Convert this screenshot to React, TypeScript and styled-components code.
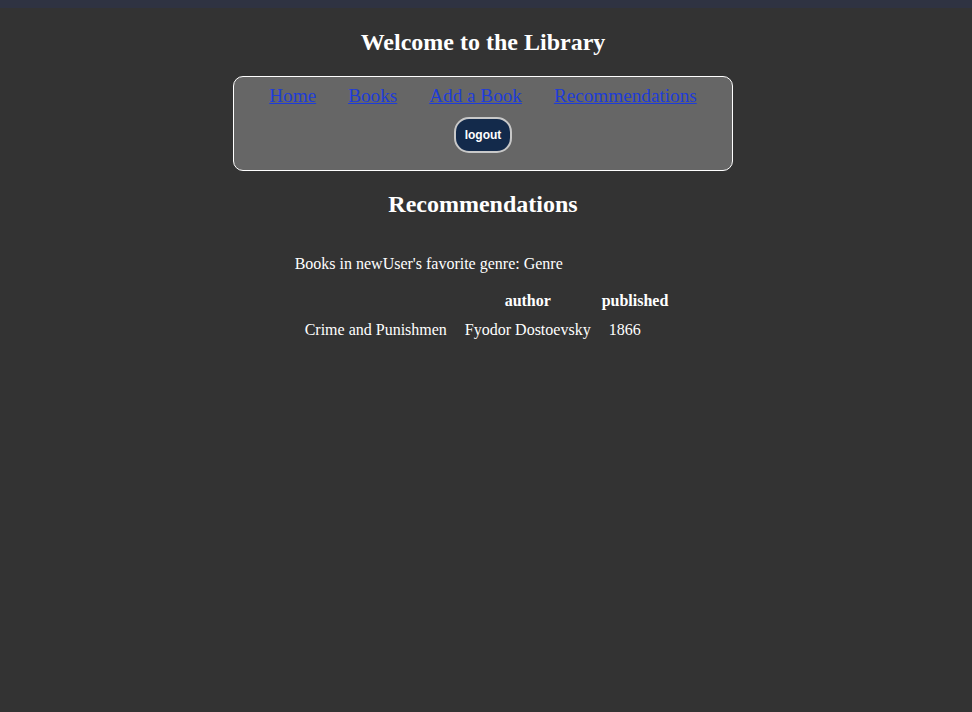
import React from 'react';
import styled, { createGlobalStyle } from 'styled-components';

const GlobalStyle = createGlobalStyle`
    html, body {
        margin: 0;
        padding: 0;
        background: #333333;
    }
    body {
        font-family: "Liberation Serif", "Times New Roman", serif;
        color: #ffffff;
    }
`;

const TopStrip = styled.div`
    height: 8px;
    background: #2f3342;
`;

const Page = styled.div`
    min-height: 704px;
    padding-right: 6px;
    background: #333333;
    display: flow-root;
`;

const Title = styled.h2`
    margin: 21px 0 20px;
    font-size: 24px;
    font-weight: bold;
    text-align: center;
`;

const NavBox = styled.nav`
    width: 498px;
    margin: 0 auto;
    padding: 8px 0 17px;
    background: #666666;
    border: 1px solid #ffffff;
    border-radius: 10px;
    display: flex;
    flex-direction: column;
    align-items: center;
`;

const LinkRow = styled.div`
    display: flex;
    justify-content: center;
    line-height: 22px;
`;

const NavLink = styled.a`
    margin: 0 16px;
    font-size: 19.2px;
    color: #1e3cd8;
    text-decoration: underline;
    cursor: pointer;
`;

const LogoutButton = styled.button`
    margin-top: 10px;
    padding: 8px 9px;
    background: #132a4b;
    color: #ffffff;
    border: 2px solid #c8c8c8;
    border-radius: 15px;
    font-family: "Liberation Sans", Arial, sans-serif;
    font-size: 12px;
    font-weight: bold;
    line-height: 16px;
    cursor: pointer;
`;

const Section = styled.section`
    display: flow-root;
`;

const SectionTitle = styled.h2`
    margin: 20px 0;
    font-size: 24px;
    font-weight: bold;
    text-align: center;
`;

const Content = styled.div`
    width: fit-content;
    margin: 0 auto;
    padding-top: 17px;
`;

const GenreLine = styled.p`
    margin: 0 0 16px;
    font-size: 16px;
`;

const BookTable = styled.table`
    border-spacing: 2px;
    font-size: 16px;
`;

const HeadCell = styled.th`
    padding: 1px;
    font-weight: bold;
    text-align: center;
`;

const Cell = styled.td`
    padding: 8px 8px 7px;
    text-align: left;
`;

interface IBook {
    title: string;
    author: string;
    published: number;
}

const books: IBook[] = [
    { title: 'Crime and Punishmen', author: 'Fyodor Dostoevsky', published: 1866 },
];

const links = ['Home', 'Books', 'Add a Book', 'Recommendations'];

const App = () => {
    return (
        <>
            <GlobalStyle />
            <TopStrip />
            <Page>
                <Title>Welcome to the Library</Title>
                <NavBox>
                    <LinkRow>
                        { links.map(link => <NavLink key={link} href="#">{ link }</NavLink>) }
                    </LinkRow>
                    <LogoutButton>logout</LogoutButton>
                </NavBox>
                <Section>
                    <SectionTitle>Recommendations</SectionTitle>
                    <Content>
                        <GenreLine>Books in newUser's favorite genre: Genre</GenreLine>
                        <BookTable>
                            <thead>
                                <tr>
                                    <HeadCell></HeadCell>
                                    <HeadCell>author</HeadCell>
                                    <HeadCell>published</HeadCell>
                                </tr>
                            </thead>
                            <tbody>
                                { books.map(book => (
                                    <tr key={book.title}>
                                        <Cell>{ book.title }</Cell>
                                        <Cell>{ book.author }</Cell>
                                        <Cell>{ book.published }</Cell>
                                    </tr>
                                )) }
                            </tbody>
                        </BookTable>
                    </Content>
                </Section>
            </Page>
        </>
    );
};

export default App;
